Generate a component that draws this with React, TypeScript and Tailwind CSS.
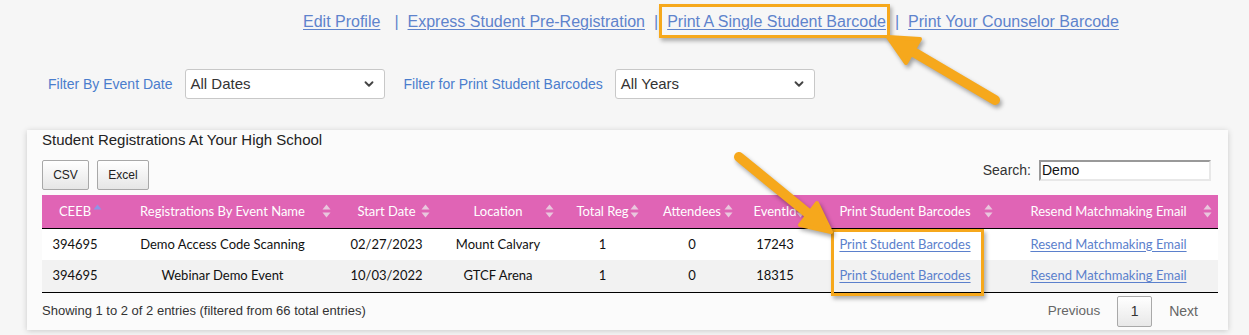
import { ChevronDown } from "lucide-react";

const navLinks = [
  "Edit Profile",
  "Express Student Pre-Registration",
  "Print A Single Student Barcode",
  "Print Your Counselor Barcode",
];

const columns = [
  { name: "CEEB", width: 66, active: true },
  { name: "Registrations By Event Name", width: 229 },
  { name: "Start Date", width: 99 },
  { name: "Location", width: 124 },
  { name: "Total Reg", width: 85 },
  { name: "Attendees", width: 94 },
  { name: "EventId", width: 72 },
  { name: "Print Student Barcodes", width: 188 },
  { name: "Resend Matchmaking Email", width: 219 },
];

const rows = [
  ["394695", "Demo Access Code Scanning", "02/27/2023", "Mount Calvary", "1", "0", "17243"],
  ["394695", "Webinar Demo Event", "10/03/2022", "GTCF Arena", "1", "0", "18315"],
];

const SortIcon = ({ active }: { active?: boolean }) => (
  <svg width="9" height="14" viewBox="0 0 9 14" className="absolute right-[6px] top-1/2 -translate-y-1/2">
    <path d="M4.5 0.5 L8.5 5.5 L0.5 5.5 Z" fill={active ? "#8e95e6" : "#e9c7de"} />
    {!active && <path d="M4.5 13.5 L8.5 8.5 L0.5 8.5 Z" fill="#e9c7de" />}
  </svg>
);

const FakeSelect = ({ label, value }: { label: string; value: string }) => (
  <div className="flex items-center">
    <span className="text-[14px] text-[#4a7dcd]">{label}</span>
    <div className="ml-[12px] flex h-[30px] w-[200px] items-center justify-between rounded-[3px] border border-[#c8c8c8] bg-white pl-[5px] pr-[8px] text-[15px] text-[#333]">
      <span>{value}</span>
      <ChevronDown size={14} strokeWidth={3.2} className="text-[#444]" />
    </div>
  </div>
);

export default function App() {
  return (
    <div
      className="relative h-[335px] w-[1249px] overflow-hidden bg-[#f6f6f6] text-[#222]"
      style={{ fontFamily: '"Liberation Sans", Arial, sans-serif' }}
    >
      {/* top links */}
      <div className="flex items-center pl-[303px] pt-[13px] text-[16px] leading-[18px]">
        {navLinks.map((l, i) => (
          <div key={l} className="flex items-center">
            {i > 0 && <span className={`text-[#5e83cc] ${i === 1 ? "ml-[14px] mr-[9px]" : "mx-[9px]"}`}>|</span>}
            <a className="text-[#5e83cc] underline decoration-1 underline-offset-[2px]">{l}</a>
          </div>
        ))}
      </div>

      {/* filters */}
      <div className="mt-[38px] flex items-center gap-[19px] pl-[48px]">
        <FakeSelect label="Filter By Event Date" value="All Dates" />
        <FakeSelect label="Filter for Print Student Barcodes" value="All Years" />
      </div>

      {/* card */}
      <div className="ml-[27px] mt-[31px] w-[1201px] bg-[#fbfbfb] pb-[3px] pl-[15px] pr-[10px] pt-[1px] shadow-[0_1px_6px_rgba(0,0,0,0.18)]">
        <div className="text-[15px] leading-[18px] text-[#222]">Student Registrations At Your High School</div>
        <div className="mt-[11px] flex items-start justify-between">
          <div className="flex gap-[8px]">
            {["CSV", "Excel"].map((b) => (
              <button
                key={b}
                className={`h-[30px] rounded-[2px] border border-[#a8a8a8] bg-gradient-to-b from-white to-[#e6e6e6] text-[12px] text-[#222] ${b === "CSV" ? "w-[47px]" : "w-[52px]"}`}
              >
                {b}
              </button>
            ))}
          </div>
          <div className="flex items-center pr-[7px] text-[14px]">
            <span className="text-[#333]">Search:</span>
            <div className="ml-[8px] flex h-[21px] w-[172px] items-center border-2 border-[#999] border-b-[#e8e8e8] border-r-[#e8e8e8] bg-white pl-[1px] text-[14px] text-[#111]">
              Demo
            </div>
          </div>
        </div>

        <table
          className="mt-[5px] w-[1176px] table-fixed border-collapse text-[13px]"
          style={{ fontFamily: 'Lato, "Noto Sans", sans-serif' }}
        >
          <colgroup>
            {columns.map((c) => (
              <col key={c.name} style={{ width: c.width }} />
            ))}
          </colgroup>
          <thead>
            <tr className="h-[33px] border-b border-black bg-[#e064b5] text-white">
              {columns.map((c) => (
                <th key={c.name} className="relative whitespace-nowrap text-center font-normal">
                  {c.name}
                  <SortIcon active={c.active} />
                </th>
              ))}
            </tr>
          </thead>
          <tbody>
            {rows.map((r, i) => (
              <tr key={i} className={`h-[32px] ${i === 1 ? "border-b border-black bg-[#f2f2f2]" : "bg-white"}`}>
                {r.map((v, j) => (
                  <td key={j} className="whitespace-nowrap text-center text-[#111]">
                    {v}
                  </td>
                ))}
                <td className="text-center">
                  <a className="text-[#5b80cc] underline underline-offset-[2px]">Print Student Barcodes</a>
                </td>
                <td className="text-center">
                  <a className="text-[#5b80cc] underline underline-offset-[2px]">Resend Matchmaking Email</a>
                </td>
              </tr>
            ))}
          </tbody>
        </table>

        <div className="flex items-center justify-between pt-[3px]">
          <span className="text-[13px] text-[#333]">Showing 1 to 2 of 2 entries (filtered from 66 total entries)</span>
          <div className="flex items-center pr-[20px] text-[14px] text-[#666]">
            <span className="text-[13.5px]">Previous</span>
            <span className="ml-[17px] flex h-[31px] w-[35px] items-center justify-center rounded-[2px] border border-[#a9a9a9] bg-gradient-to-b from-white to-[#e8e8e8] text-[#333]">
              1
            </span>
            <span className="ml-[17px]">Next</span>
          </div>
        </div>
      </div>

      {/* annotation boxes */}
      <div className="pointer-events-none absolute left-[659px] top-[4px] h-[34px] w-[231px] border-[3px] border-[#f6a81c] shadow-[2px_3px_4px_rgba(0,0,0,0.3)]" />
      <div className="pointer-events-none absolute left-[831px] top-[229px] h-[67px] w-[153px] border-[3px] border-[#f6a81c] shadow-[2px_3px_4px_rgba(0,0,0,0.3)]" />

      {/* arrows */}
      <svg
        width="1249"
        height="335"
        className="pointer-events-none absolute left-0 top-0 drop-shadow-[2px_3px_2px_rgba(0,0,0,0.35)]"
      >
        <g fill="#f6a81c" stroke="#f6a81c" strokeLinejoin="round" strokeLinecap="round">
          <line x1="995" y1="100" x2="910" y2="50" strokeWidth="10" />
          <polygon points="888,37 920,39 906,63" strokeWidth="4" />
          <line x1="739" y1="157" x2="810" y2="215" strokeWidth="10" />
          <polygon points="831,232 800,225 817,203" strokeWidth="4" />
        </g>
      </svg>
    </div>
  );
}
